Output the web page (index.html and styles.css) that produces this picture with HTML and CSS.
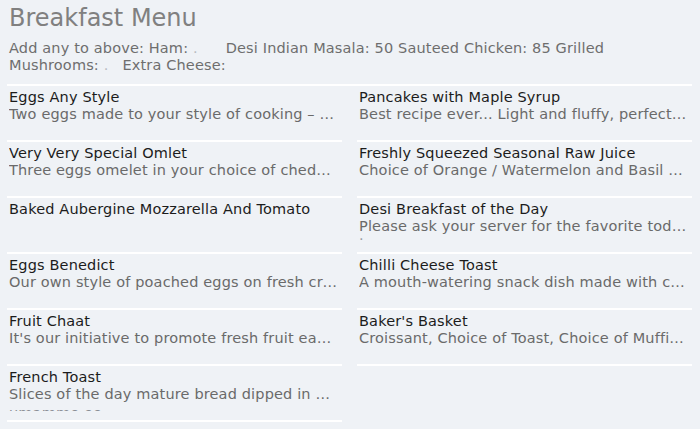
FILE: index.html
```html
<!DOCTYPE html>
<html>
<head>
<meta charset="utf-8">
<title>Breakfast Menu</title>
<link rel="stylesheet" href="styles.css">
</head>
<body>
<div class="page">
  <header class="header">
    <h1 class="title">Breakfast Menu</h1>
    <p class="addons">Add any to above: Ham: <span class="faint">.</span><span class="gap"></span>Desi Indian Masala: 50 Sauteed Chicken: 85 Grilled Mushrooms: <span class="faint">.</span><span class="gap-sm"></span>Extra Cheese:</p>
  </header>
  <div class="grid">
    <div class="item"><div class="body"><div class="name">Eggs Any Style</div><div class="desc">Two eggs made to your style of cooking – fried, scrambled or poached</div></div></div>
    <div class="item"><div class="body"><div class="name">Pancakes with Maple Syrup</div><div class="desc">Best recipe ever... Light and fluffy, perfect with maple syrup</div></div></div>
    <div class="item"><div class="body"><div class="name">Very Very Special Omlet</div><div class="desc">Three eggs omelet in your choice of cheddar, mushrooms or peppers</div></div></div>
    <div class="item"><div class="body"><div class="name">Freshly Squeezed Seasonal Raw Juice</div><div class="desc">Choice of Orange / Watermelon and Basil / Pineapple</div></div></div>
    <div class="item"><div class="body"><div class="name">Baked Aubergine Mozzarella And Tomato</div></div></div>
    <div class="item"><div class="body"><div class="name">Desi Breakfast of the Day</div><div class="desc">Please ask your server for the favorite today</div><div class="desc dot">.</div></div></div>
    <div class="item"><div class="body"><div class="name">Eggs Benedict</div><div class="desc">Our own style of poached eggs on fresh croissant</div></div></div>
    <div class="item"><div class="body"><div class="name">Chilli Cheese Toast</div><div class="desc">A mouth-watering snack dish made with cheese and chillies</div></div></div>
    <div class="item"><div class="body"><div class="name">Fruit Chaat</div><div class="desc">It's our initiative to promote fresh fruit eating</div></div></div>
    <div class="item"><div class="body"><div class="name">Baker's Basket</div><div class="desc">Croissant, Choice of Toast, Choice of Muffin, Jam and Butter</div></div></div>
    <div class="item"><div class="body"><div class="name">French Toast</div><div class="desc">Slices of the day mature bread dipped in egg batter</div><div class="desc more">umamme ee</div></div></div>
  </div>
</div>
</body>
</html>
```
FILE: styles.css
```css
html, body {
  margin: 0;
  padding: 0;
  background: #eff2f6;
}
body {
  font-family: "DejaVu Sans", Verdana, sans-serif;
  width: 700px;
  height: 429px;
  overflow: hidden;
}
.page {
  padding: 0 8px 0 7px;
}
.header {
  padding: 4px 0 11px 2px;
  border-bottom: 2px solid #ffffff;
}
.title {
  margin: 0;
  font-size: 24px;
  line-height: 28px;
  font-weight: normal;
  color: #808080;
}
.addons {
  margin: 8px 0 0;
  font-size: 14.5px;
  letter-spacing: 0.15px;
  line-height: 16.5px;
  color: #6e6e6e;
}
.faint {
  color: #b8bcc2;
}
.gap {
  display: inline-block;
  width: 28px;
}
.gap-sm {
  display: inline-block;
  width: 14px;
}
.grid {
  display: grid;
  grid-template-columns: minmax(0, 1fr) minmax(0, 1fr);
  column-gap: 15px;
}
.item {
  height: 56px;
  box-sizing: border-box;
  border-bottom: 2px solid #ffffff;
  padding: 3px 5px 0 2px;
  min-width: 0;
}
.body {
  height: 42px;
  overflow: hidden;
}
.name {
  font-size: 14.5px;
  letter-spacing: 0.15px;
  line-height: 17px;
  color: #1c1c1c;
  white-space: nowrap;
  overflow: hidden;
  text-overflow: ellipsis;
}
.desc {
  font-size: 14.5px;
  letter-spacing: 0.15px;
  line-height: 16px;
  color: #6a6a6a;
  white-space: nowrap;
  overflow: hidden;
  text-overflow: ellipsis;
}
.more {
  margin-top: 3px;
  color: #8a8e94;
}
.dot {
  margin-top: -7px;
  color: #9a9ea4;
}
```
